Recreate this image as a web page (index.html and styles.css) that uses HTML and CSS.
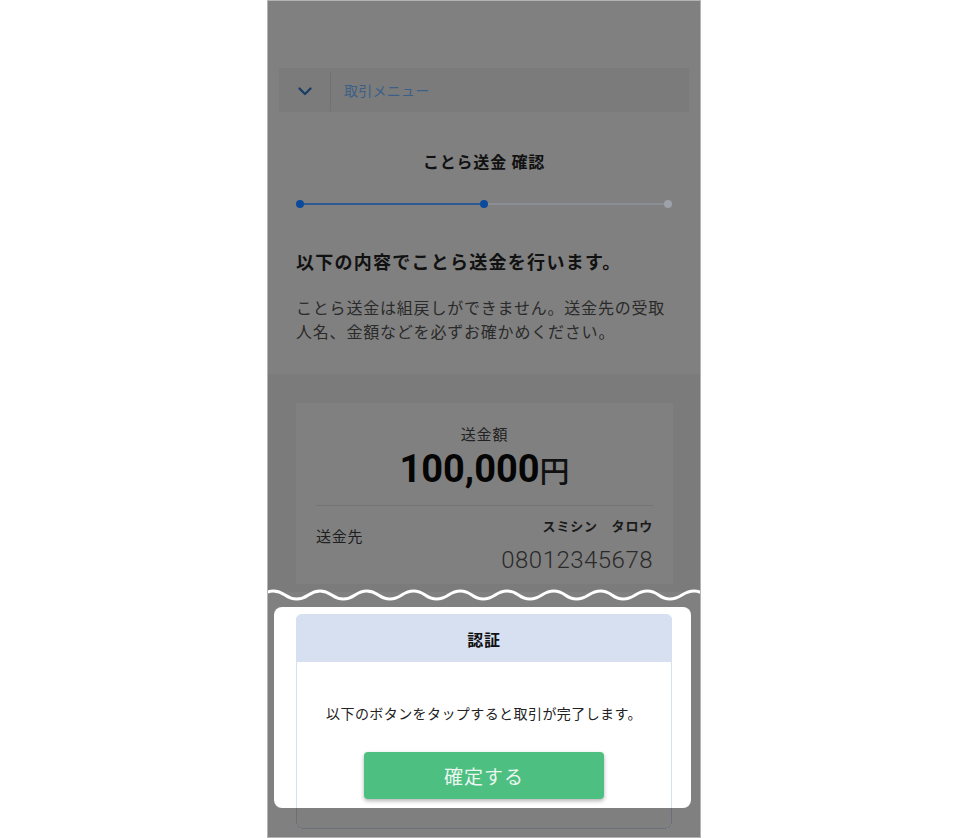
FILE: index.html
```html
<!DOCTYPE html>
<html lang="ja">
<head>
    <meta charset="UTF-8">
    <meta name="viewport" content="width=device-width, initial-scale=1.0">
    <title>ことら送金 確認</title>
    <link rel="stylesheet" href="styles.css">
</head>
<body>
    <div class="phone">
        <section class="upper">
            <div class="menu-bar">
                <span class="menu-toggle">
                    <svg width="14" height="9" viewBox="0 0 14 9"><path d="M1.5 1.5 L7 7 L12.5 1.5" fill="none" stroke="#173c66" stroke-width="2.2" stroke-linecap="round" stroke-linejoin="round"/></svg>
                </span>
                <span class="menu-label">取引メニュー</span>
            </div>

            <h1 class="page-title">ことら送金 確認</h1>

            <div class="steps">
                <span class="step-dot done"></span>
                <span class="step-line done"></span>
                <span class="step-dot done"></span>
                <span class="step-line"></span>
                <span class="step-dot"></span>
            </div>

            <h2 class="lead">以下の内容でことら送金を行います。</h2>
            <p class="note">ことら送金は組戻しができません。送金先の受取人名、金額などを必ずお確かめください。</p>
        </section>

        <section class="lower">
            <div class="summary-card">
                <div class="amount-label">送金額</div>
                <div class="amount">100,000<span class="yen">円</span></div>
                <div class="payee-row">
                    <div class="payee-label">送金先</div>
                    <div class="payee">
                        <div class="payee-name">スミシン　タロウ</div>
                        <div class="payee-number">08012345678</div>
                    </div>
                </div>
            </div>
        </section>

        <!-- torn edge between the two halves -->
        <svg class="tear" width="432" height="14" viewBox="0 0 432 14">
            <path d="M-6.4 7 Q5.3 -1 17 7 T40.4 7 T63.7 7 T87.1 7 T110.4 7 T133.8 7 T157.1 7 T180.5 7 T203.8 7 T227.2 7 T250.5 7 T273.9 7 T297.2 7 T320.6 7 T343.9 7 T367.3 7 T390.6 7 T414 7 T437.3 7" fill="none" stroke="#fff" stroke-width="3" stroke-linecap="round"/>
        </svg>

        <section class="sheet">
            <div class="spotlight">
                <div class="auth-modal">
                    <div class="auth-head">認証</div>
                    <div class="auth-body">
                        <p class="auth-text">以下のボタンをタップすると取引が完了します。</p>
                        <button class="confirm-btn">確定する</button>
                    </div>
                </div>
            </div>
        </section>
    </div>
</body>
</html>
```

FILE: styles.css
```css
body {
    margin: 0;
    background: #fff;
}
.phone {
    position: relative;
    width: 432px;
    height: 836px;
    margin-left: 267px;
    border: 1px solid #b4b4b4;
    background: #808080;
    overflow: hidden;
    font-family: "Noto Sans CJK JP", "Noto Sans", sans-serif;
    letter-spacing: 0.05em;
    color: #1a1a1a;
}

/* top half */
.upper {
    padding: 67px 28px 31px;
}
.menu-bar {
    display: flex;
    height: 44px;
    margin: 0 -17px;
    background: #7b7b7b;
}
.menu-toggle {
    display: flex;
    align-items: center;
    justify-content: center;
    width: 51px;
    margin: 4px 0 1px;
    border-right: 1px solid #727272;
}
.menu-label {
    padding-left: 13px;
    line-height: 44px;
    font-size: 14px;
    letter-spacing: 0.02em;
    color: #3c5f88;
}
.page-title {
    margin: 37px 0 0;
    font-size: 16px;
    line-height: 24px;
    font-weight: 700;
    text-align: center;
    color: #111;
}
.steps {
    display: flex;
    align-items: center;
    height: 8px;
    margin-top: 27px;
}
.step-dot {
    width: 8px;
    height: 8px;
    border-radius: 50%;
    background: #9da1a8;
}
.step-dot.done {
    background: #0c4a9b;
}
.step-line {
    flex: 1;
    height: 2px;
    background: #8b8e94;
}
.step-line.done {
    background: #2f5a93;
}
.lead {
    margin: 39px 0 0;
    font-size: 18px;
    line-height: 28px;
    font-weight: 700;
    letter-spacing: 0.07em;
    color: #111;
}
.note {
    margin: 20px 0 0;
    font-size: 16px;
    line-height: 24px;
    color: #2a2a2a;
}

/* bottom half */
.lower {
    height: 218px;
    box-sizing: border-box;
    padding: 29px 27px 0 28px;
    background: #7b7b7b;
    overflow: hidden;
}
.summary-card {
    padding: 20px 20px 9px;
    background: #808080;
}
.amount-label {
    font-size: 15px;
    line-height: 22px;
    text-align: center;
    color: #222;
}
.amount {
    margin-top: 2px;
    padding-bottom: 14px;
    border-bottom: 1px solid #747474;
    font-family: Roboto, "Noto Sans CJK JP", sans-serif;
    font-size: 38px;
    line-height: 44px;
    font-weight: 700;
    letter-spacing: 0;
    text-align: center;
    color: #050505;
}
.yen {
    font-family: "Noto Sans CJK JP", sans-serif;
    font-size: 30px;
    font-weight: 500;
    color: #111;
}
.payee-row {
    display: flex;
    justify-content: space-between;
    padding-top: 10px;
}
.payee-label {
    margin-top: 9px;
    font-size: 15px;
    line-height: 22px;
    color: #1e1e1e;
}
.payee {
    text-align: right;
}
.payee-name {
    font-size: 13px;
    line-height: 20px;
    font-weight: 700;
    color: #1a1a1a;
}
.payee-number {
    margin-top: 9px;
    font-family: Roboto, sans-serif;
    font-size: 24px;
    line-height: 30px;
    font-weight: 300;
    letter-spacing: 0.02em;
    color: #2a2a2a;
}

.tear {
    position: absolute;
    top: 587px;
    left: 0;
}

/* highlighted dialog */
.sheet {
    padding: 15px 9px 0 6px;
}
.spotlight {
    height: 201px;
    box-sizing: border-box;
    padding: 7px 19px 0 22px;
    background: #fff;
    border-radius: 8px;
}
.auth-modal {
    position: relative;
    height: 215px;
    box-sizing: border-box;
    border: 1px solid #d6e0f0;
    border-top: none;
    border-radius: 6px;
    background: #fff;
}
.auth-modal::after {
    content: "";
    position: absolute;
    left: -1px;
    right: -1px;
    bottom: -1px;
    height: 21px;
    background: rgba(0, 0, 0, 0.5);
    border-radius: 0 0 6px 6px;
}
.auth-head {
    height: 48px;
    margin: 0 -1px;
    border-radius: 6px 6px 0 0;
    background: #d6e0f0;
    font-size: 16px;
    line-height: 50px;
    font-weight: 700;
    text-align: center;
    color: #111;
}
.auth-body {
    padding-top: 40px;
    text-align: center;
}
.auth-text {
    margin: 0;
    font-size: 14px;
    line-height: 22px;
    letter-spacing: 0.03em;
    color: #222;
}
.confirm-btn {
    display: block;
    width: 240px;
    height: 47px;
    margin: 28px auto 0;
    border: none;
    border-radius: 4px;
    background: #4dbf81;
    box-shadow: 0 2px 4px rgba(0, 0, 0, 0.3);
    font-family: inherit;
    font-size: 19px;
    letter-spacing: 0.05em;
    color: #eaf6ef;
}
```
